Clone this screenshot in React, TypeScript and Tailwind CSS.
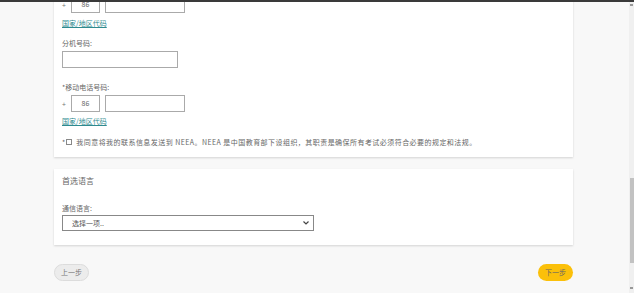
import React from "react";

const font = { fontFamily: '"Noto Sans CJK SC", "Liberation Sans", sans-serif' };

function PhoneRow() {
  return (
    <div className="flex items-center">
      <span className="w-[9px] text-[7px] leading-[8px] text-[#777]">+</span>
      <div className="w-[29px] h-[17px] border border-[#aaa] flex items-center justify-center text-[7px] text-[#666] bg-white">86</div>
      <div className="ml-[5px] w-[80px] h-[17px] border border-[#aaa] bg-white" />
    </div>
  );
}

function Link() {
  return (
    <div className="text-[7px] leading-[8px] text-[#2e8a8f] underline decoration-[#2e8a8f]">国家/地区代码</div>
  );
}

export default function App() {
  return (
    <div style={font} className="w-[634px] h-[293px] overflow-hidden bg-[#f8f8f8] flex relative">
      <div className="absolute top-0 left-0 right-0 h-[2px] bg-[#3a3a3a] z-10" />
      <div className="flex-1 pl-[54px] pr-[56px]">
        <div className="-mt-[20px] bg-white shadow-[0_1px_2px_rgba(0,0,0,0.15)] px-[8px] pt-[16px] pb-[11px]">
          <PhoneRow />
          <div className="mt-[6px]"><Link /></div>
          <div className="mt-[12px] text-[7px] leading-[8px] text-[#666]">分机号码:</div>
          <div className="mt-[4px] w-[116px] h-[17px] border border-[#aaa] bg-white" />
          <div className="mt-[15px] text-[7px] leading-[8px] text-[#666]">*移动电话号码:</div>
          <div className="mt-[4px]"><PhoneRow /></div>
          <div className="mt-[5px]"><Link /></div>
          <div className="mt-[13px] flex items-center text-[7px] leading-[8px] text-[#666]">
            <span>*</span>
            <span className="ml-[1px] w-[6px] h-[6px] border border-[#888] bg-white inline-block" />
            <span className="ml-[4px] tracking-[0.45px]">我同意将我的联系信息发送到 NEEA。NEEA 是中国教育部下设组织，其职责是确保所有考试必须符合必要的规定和法规。</span>
          </div>
        </div>
        <div className="mt-[12px] bg-white shadow-[0_1px_2px_rgba(0,0,0,0.15)] px-[8px] pt-[8px] pb-[14px]">
          <div className="text-[8px] leading-[8px] text-[#666]">首选语言</div>
          <div className="mt-[19px] text-[7px] leading-[8px] text-[#666]">通信语言:</div>
          <div className="mt-[3px] w-[252px] h-[16px] border border-[#888] bg-white flex items-center justify-between px-[9px] pr-[4px]">
            <span className="text-[7px] leading-[8px] text-[#555]">选择一项..</span>
            <svg width="6" height="4" viewBox="0 0 6 4"><path d="M0.5 0.5 L3 3 L5.5 0.5" fill="none" stroke="#444" strokeWidth="1.2" /></svg>
          </div>
        </div>
        <div className="mt-[19px] flex justify-between">
          <div className="w-[35px] h-[17px] rounded-full bg-[#ececec] border border-[#dcdcdc] flex items-center justify-center text-[7px] text-[#777]">上一步</div>
          <div className="w-[35px] h-[17px] rounded-full bg-[#fbc00a] flex items-center justify-center text-[7px] text-[#666]">下一步</div>
        </div>
      </div>
      <div className="w-[5px] h-full bg-[#f0f0f0] flex flex-col items-center">
        <div className="mt-[4px] w-[3px] h-[2px] bg-[#999]" />
        <div className="flex-1" />
        <div className="w-[4px] h-[85px] bg-[#c2c2c2] mb-[24px]" />
        <div className="w-[3px] h-[2px] bg-[#999] mb-[4px]" />
      </div>
    </div>
  );
}
